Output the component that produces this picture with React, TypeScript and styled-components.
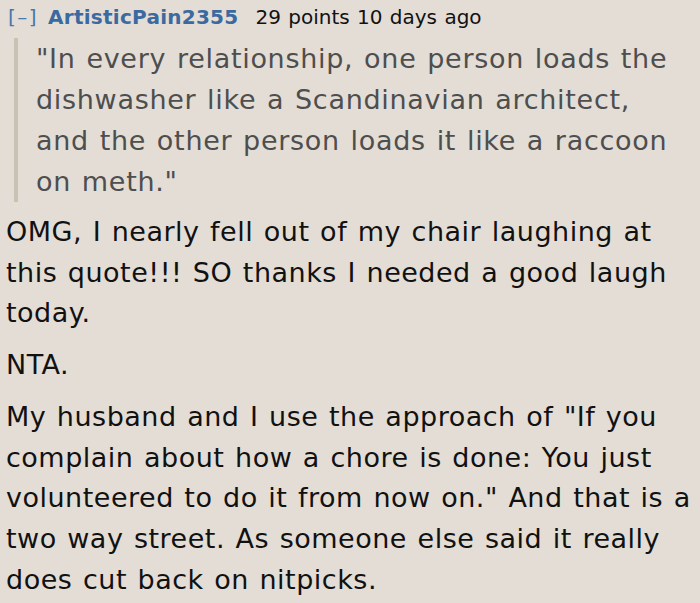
import React from "react";
import styled, { createGlobalStyle } from "styled-components";

const GlobalStyle = createGlobalStyle`
  html, body {
    margin: 0;
    padding: 0;
    background: #e3ddd6;
  }
`;

const Comment = styled.div`
  width: 700px;
  height: 603px;
  overflow: hidden;
  box-sizing: border-box;
  padding: 1px 4px 0 6px;
  font-family: Verdana, "DejaVu Sans", sans-serif;
  background: #e3ddd6;
  color: #111;
`;

const Tagline = styled.div`
  display: flex;
  align-items: baseline;
  font-size: 20px;
  line-height: 32px;
  padding-left: 2px;
`;

const Expand = styled.span`
  color: #4a77ad;
  letter-spacing: 1.5px;
`;

const Author = styled.a`
  color: #3a6aa0;
  font-weight: bold;
  margin-left: 10px;
  letter-spacing: 0.25px;
`;

const Meta = styled.span`
  color: #111;
  margin-left: 17px;
  word-spacing: 1px;
`;

const Quote = styled.blockquote`
  margin: 5px 22px 0 8px;
  padding: 0 0 0 18px;
  border-left: 4px solid #c8c2b4;
  color: #4e4e4e;
  font-size: 27px;
  line-height: 41px;
  letter-spacing: 0.7px;
  word-spacing: 1.5px;
`;

const Paragraph = styled.p`
  margin: 10px 0 0 0;
  font-size: 27px;
  line-height: 40.7px;
  letter-spacing: 0.5px;
  word-spacing: 1.5px;

  & + & {
    margin-top: 11px;
  }
`;

export default function App() {
  return (
    <>
      <GlobalStyle />
      <Comment>
        <Tagline>
          <Expand>[–]</Expand>
          <Author>ArtisticPain2355</Author>
          <Meta>29 points 10 days ago</Meta>
        </Tagline>
        <Quote>
          "In every relationship, one person loads the dishwasher like a
          Scandinavian architect, and the other person loads it like a raccoon
          on meth."
        </Quote>
        <Paragraph>
          OMG, I nearly fell out of my chair laughing at this quote!!! SO thanks
          I needed a good laugh today.
        </Paragraph>
        <Paragraph>NTA.</Paragraph>
        <Paragraph>
          My husband and I use the approach of "If you complain about how a
          chore is done: You just volunteered to do it from now on." And that is
          a two way street. As someone else said it really does cut back on
          nitpicks.
        </Paragraph>
      </Comment>
    </>
  );
}
